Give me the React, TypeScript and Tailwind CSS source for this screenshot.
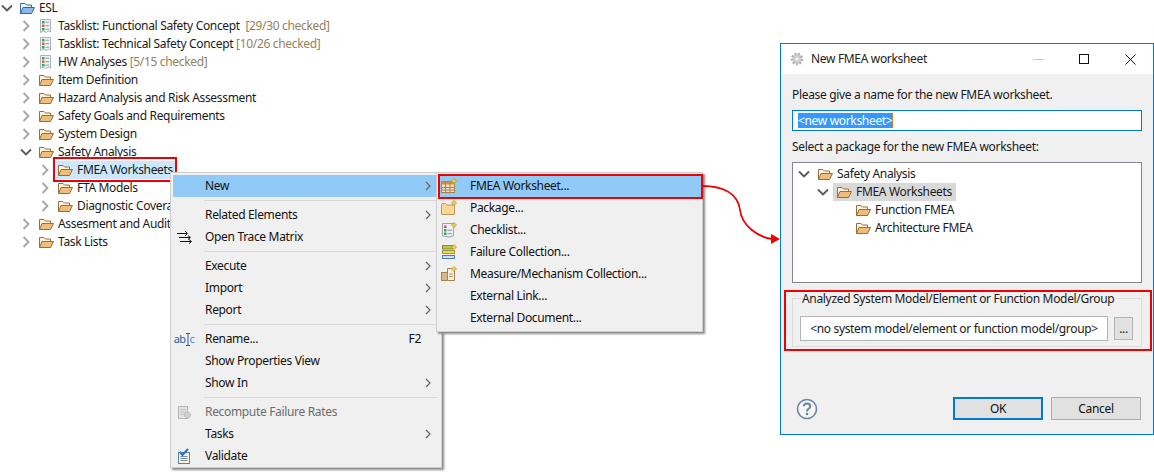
import React from "react";

function Chevron({ open, dark }: { open?: boolean; dark?: boolean }) {
  return (
    <svg width="12" height="12" viewBox="0 0 12 12" fill="none" stroke={dark ? "#595959" : "#a6a6a6"} strokeWidth="1.8" className="shrink-0">
      {open ? <path d="M1 3.5 L6 8.5 L11 3.5" /> : <path d="M3.5 1 L8.5 6 L3.5 11" />}
    </svg>
  );
}

function Folder({ blue }: { blue?: boolean }) {
  return (
    <svg width="16" height="14" viewBox="0 0 16 14" className="shrink-0">
      <path d="M1.5 12.5 V2.5 H6 L7.5 4 H12.5 V6.5" fill={blue ? "#eef5fc" : "#fdf3dc"} stroke={blue ? "#3a6ea8" : "#96703a"} />
      <path d="M1.5 12.5 L4 6.5 H15.5 L12.5 12.5 Z" fill={blue ? "#8db9e8" : "#f0bd7c"} stroke={blue ? "#2f68a8" : "#96703a"} />
    </svg>
  );
}

function ChecklistIcon() {
  return (
    <svg width="16" height="16" viewBox="0 0 16 16" className="shrink-0">
      <path d="M2.5 1.5 H12.5 V14 L10.5 13 L8 14.5 L5.5 13 L2.5 14.5 Z" fill="#f0f3f6" stroke="#a9b4bf" />
      <rect x="4" y="3" width="2.5" height="2.5" fill="#35a35a" />
      <rect x="4" y="6.5" width="2.5" height="2.5" fill="#d2614a" />
      <rect x="4" y="10" width="2.5" height="2.5" fill="#35a35a" />
      <path d="M7.5 4.2 H11 M7.5 7.7 H11 M7.5 11.2 H11" stroke="#8b95a0" />
    </svg>
  );
}

function Plus() {
  return <path d="M13 0.5 L15.5 3 L13 5.5 L10.5 3 Z" fill="#f3d24f" stroke="#a88a2a" strokeWidth="0.7" />;
}

function TableIcon() {
  return (
    <svg width="16" height="16" viewBox="0 0 16 16">
      <rect x="0.5" y="3.5" width="13" height="11" fill="#f6e3c4" stroke="#a8814c" />
      <rect x="0.5" y="3.5" width="13" height="3" fill="#d3913f" />
      <path d="M0.5 9.5 H13.5 M0.5 12 H13.5 M4.5 3.5 V14.5 M9 3.5 V14.5" stroke="#a8814c" />
      <Plus />
    </svg>
  );
}

function PackageIcon() {
  return (
    <svg width="16" height="16" viewBox="0 0 16 16">
      <path d="M0.5 14.5 V4.5 Q0.5 3.5 2 3.5 H4.5 L6 5 H13.5 V14.5 Z" fill="#f8d79b" stroke="#c49a58" />
      <Plus />
    </svg>
  );
}

function NewChecklistIcon() {
  return (
    <svg width="16" height="16" viewBox="0 0 16 16">
      <path d="M1.5 1.5 H12.5 V14 L8 15 L1.5 14 Z" fill="#eef1f4" stroke="#9aa5b1" />
      <rect x="3" y="3.5" width="2.5" height="2.5" fill="#c25a4a" />
      <rect x="3" y="7" width="2.5" height="2.5" fill="#3f9a5a" />
      <rect x="3" y="10.5" width="2.5" height="2.5" fill="#3f9a5a" />
      <path d="M6.5 8.2 H11 M6.5 11.7 H11" stroke="#8b95a0" />
      <Plus />
    </svg>
  );
}

function CollectionIcon() {
  return (
    <svg width="16" height="16" viewBox="0 0 16 16">
      <rect x="1.5" y="1.5" width="10" height="3.5" fill="#b9c94a" stroke="#7f8f3a" />
      <rect x="1.5" y="6.5" width="12" height="3" fill="#ecd95c" stroke="#a8963a" />
      <rect x="1.5" y="11.5" width="12" height="3" fill="#cfe0f2" stroke="#4f7fb5" />
      <Plus />
    </svg>
  );
}

function MeasureIcon() {
  return (
    <svg width="16" height="16" viewBox="0 0 16 16">
      <rect x="0.5" y="6.5" width="6" height="8" fill="#d9b98a" stroke="#a8814c" />
      <path d="M6.5 2.5 H13.5 V14.5 H6.5 Z" fill="#f6efe2" stroke="#a8814c" />
      <path d="M8 8 H12 M8 10.5 H12" stroke="#b59a70" />
      <Plus />
    </svg>
  );
}

function TraceIcon() {
  return (
    <svg width="15" height="14" viewBox="0 0 15 14" fill="none" stroke="#111" strokeWidth="1">
      <path d="M0 3.5 H10 M8 1 L10.5 3.5 L8 6 M2 7.5 H13 M11 5.5 L13.5 7.5 L11 9.5 M3 11.5 H14 M12 9.5 L14.5 11.5 L12 13.5" />
    </svg>
  );
}

function RenameIcon() {
  return (
    <span className="flex items-center text-[11px] tracking-[-0.6px] text-[#2a5f9e]">
      ab
      <svg width="4" height="13" viewBox="0 0 4 13" fill="none" stroke="#2a5f9e" className="shrink-0">
        <path d="M0 0.5 H4 M0 12.5 H4 M2 0.5 V12.5" />
      </svg>
      <span className="text-[#3a8ad8]">c</span>
    </span>
  );
}

function RecomputeIcon() {
  return (
    <svg width="15" height="15" viewBox="0 0 15 15">
      <rect x="1.5" y="1.5" width="9" height="12" fill="#e4e4e4" stroke="#b5b5b5" />
      <path d="M3 4.5 H9 M3 7 H9 M3 9.5 H7" stroke="#c0c0c0" />
      <circle cx="10.5" cy="10" r="3" fill="#d0d0d0" stroke="#b0b0b0" strokeDasharray="1.5 1" />
    </svg>
  );
}

function ValidateIcon() {
  return (
    <svg width="14" height="16" viewBox="0 0 14 16">
      <rect x="1.5" y="4.5" width="11" height="11" fill="#f8f2d8" stroke="#5d7fa8" />
      <path d="M3.5 8.5 H10.5 M3.5 10.5 H10.5 M3.5 12.5 H10.5" stroke="#7b8fa8" />
      <path d="M3 4 L5.5 7 L11 1" fill="none" stroke="#1f6fe0" strokeWidth="2" />
    </svg>
  );
}

function GearIcon() {
  return (
    <svg width="14" height="14" viewBox="0 0 14 14">
      <circle cx="7" cy="7" r="5" fill="#d0d0d0" stroke="#b4b4b4" strokeWidth="2.6" strokeDasharray="2 1.4" />
      <circle cx="7" cy="7" r="3.6" fill="#cdcdcd" />
      <circle cx="7" cy="7" r="1.6" fill="#f2f2f2" />
    </svg>
  );
}

const treeIndent = ["pl-[1px]", "pl-[20px]", "pl-[39px]"];

function TreeRow({
  level,
  label,
  note,
  icon,
  open,
  selected,
}: {
  level: number;
  label: string;
  note?: string;
  icon?: React.ReactNode;
  open?: boolean;
  selected?: boolean;
}) {
  return (
    <div className={`flex h-[18px] items-center ${treeIndent[level]}`}>
      <span className="flex w-[17px] shrink-0 justify-start">
        <Chevron open={open} dark={open} />
      </span>
      <div className={`flex h-[18px] items-center gap-[4px] pl-[1px] pr-[3px] ${selected ? "bg-[#cce8ff]" : ""}`}>
        {icon ?? <Folder />}
        <span className="whitespace-pre">
          {label}
          {note ? <span className="text-[#95815a]">{note}</span> : null}
        </span>
      </div>
    </div>
  );
}

function MenuItem({
  label,
  icon,
  arrow,
  accel,
  active,
  disabled,
}: {
  label: string;
  icon?: React.ReactNode;
  arrow?: boolean;
  accel?: string;
  active?: boolean;
  disabled?: boolean;
}) {
  return (
    <div className={`flex h-[22px] items-center ${active ? "bg-[#91c9f7]" : ""} ${disabled ? "text-[#6d6d6d]" : "text-[#111]"}`}>
      <span className="flex w-[32px] shrink-0 justify-center pr-[10px]">{icon}</span>
      <span className="flex-1 whitespace-nowrap">{label}</span>
      {accel ? <span className="mr-[16px]">{accel}</span> : null}
      {arrow ? (
        <svg width="6" height="10" viewBox="0 0 6 10" fill="none" stroke="#666" strokeWidth="1.2" className="mr-[6px]">
          <path d="M1 1 L5 5 L1 9" />
        </svg>
      ) : null}
    </div>
  );
}

function MenuSep() {
  return <div className="my-[3px] ml-[31px] h-px bg-[#d7d7d7]" />;
}

export default function App() {
  return (
    <div className="relative h-[473px] w-[1154px] overflow-hidden bg-white font-['Noto_Sans',sans-serif] text-[12px] tracking-[-0.33px] text-[#1a1a1a]">
      <div className="-mt-px flex flex-col">
        <TreeRow level={0} label="ESL" open icon={<Folder blue />} />
        <TreeRow level={1} label="Tasklist: Functional Safety Concept " note=" [29/30 checked]" icon={<ChecklistIcon />} />
        <TreeRow level={1} label="Tasklist: Technical Safety Concept " note="[10/26 checked]" icon={<ChecklistIcon />} />
        <TreeRow level={1} label="HW Analyses " note="[5/15 checked]" icon={<ChecklistIcon />} />
        <TreeRow level={1} label="Item Definition" />
        <TreeRow level={1} label="Hazard Analysis and Risk Assessment" />
        <TreeRow level={1} label="Safety Goals and Requirements" />
        <TreeRow level={1} label="System Design" />
        <TreeRow level={1} label="Safety Analysis" open />
        <TreeRow level={2} label="FMEA Worksheets" selected />
        <TreeRow level={2} label="FTA Models" />
        <TreeRow level={2} label="Diagnostic Coverage" />
        <TreeRow level={1} label="Assesment and Audit" />
        <TreeRow level={1} label="Task Lists" />
      </div>

      <div className="absolute left-[53px] top-[157px] h-[25px] w-[124px] border-2 border-[#f00000]" />

      {/* main context menu */}
      <div className="absolute left-[170px] top-[172px] h-[296px] w-[272px] border border-[#cfcfcf] bg-[#f0f0f0] py-[2px] pl-[2px] pr-[4px] shadow-[2px_2px_2px_#8a8a8a]">
        <MenuItem label="New" arrow active />
        <MenuSep />
        <MenuItem label="Related Elements" arrow />
        <MenuItem label="Open Trace Matrix" icon={<TraceIcon />} />
        <MenuSep />
        <MenuItem label="Execute" arrow />
        <MenuItem label="Import" arrow />
        <MenuItem label="Report" arrow />
        <MenuSep />
        <MenuItem label="Rename..." accel="F2" icon={<RenameIcon />} />
        <MenuItem label="Show Properties View" />
        <MenuItem label="Show In" arrow />
        <MenuSep />
        <MenuItem label="Recompute Failure Rates" disabled icon={<RecomputeIcon />} />
        <MenuItem label="Tasks" arrow />
        <MenuItem label="Validate" icon={<ValidateIcon />} />
      </div>

      {/* submenu */}
      <div className="absolute left-[436px] top-[172px] h-[160px] w-[267px] border border-[#cfcfcf] bg-[#f0f0f0] py-[2px] pl-[1px] pr-[1px] shadow-[2px_2px_2px_#8a8a8a]">
        <MenuItem label="FMEA Worksheet..." active icon={<TableIcon />} />
        <MenuItem label="Package..." icon={<PackageIcon />} />
        <MenuItem label="Checklist..." icon={<NewChecklistIcon />} />
        <MenuItem label="Failure Collection..." icon={<CollectionIcon />} />
        <MenuItem label="Measure/Mechanism Collection..." icon={<MeasureIcon />} />
        <MenuItem label="External Link..." />
        <MenuItem label="External Document..." />
      </div>
      <div className="absolute left-[438px] top-[174px] h-[25px] w-[265px] border-2 border-[#f00000]" />

      {/* callout arrow */}
      <svg width="90" height="70" viewBox="0 0 90 70" fill="none" className="absolute left-[700px] top-[180px]">
        <path d="M2 6 C 24 6, 38 14, 40 30 C 42 46, 58 57, 72 59" stroke="#f00000" strokeWidth="1.8" />
        <path d="M71 54 L80 59 L71 64 Z" fill="#f00000" />
      </svg>

      {/* dialog */}
      <div className="absolute left-[780px] top-[43px] flex h-[392px] w-[374px] flex-col border border-[#0078d7] bg-[#f0f0f0]">
        <div className="flex h-[30px] shrink-0 items-center bg-white pl-[9px]">
          <GearIcon />
          <span className="ml-[7px] flex-1 text-[#222]">New FMEA worksheet</span>
          <span className="h-px w-[11px] bg-[#c8c8c8]" />
          <span className="ml-[35px] h-[10px] w-[10px] border border-[#111]" />
          <svg width="11" height="11" viewBox="0 0 11 11" stroke="#111" className="ml-[36px] mr-[17px]">
            <path d="M0.5 0.5 L10.5 10.5 M10.5 0.5 L0.5 10.5" />
          </svg>
        </div>

        <div className="flex flex-1 flex-col px-[11px]">
          <div className="mt-[12px] leading-[18px]">Please give a name for the new FMEA worksheet.</div>
          <div className="mt-[6px] flex h-[21px] items-center border border-[#0078d7] bg-white pl-[5px]">
            <span className="border-r border-r-[#e07a20] bg-[#3399ff] leading-[15px] text-white">&lt;new worksheet&gt;</span>
          </div>
          <div className="mt-[7px] leading-[18px]">Select a package for the new FMEA worksheet:</div>
          <div className="mt-[6px] flex h-[121px] flex-col border border-[#828790] bg-white pl-[5px] pt-[2px]">
            <div className="flex h-[18px] items-center gap-[7px]">
              <Chevron open dark />
              <span className="flex items-center gap-[4px]">
                <Folder />
                <span>Safety Analysis</span>
              </span>
            </div>
            <div className="flex h-[18px] items-center pl-[19px]">
              <Chevron open dark />
              <div className="ml-[4px] flex h-[18px] items-center gap-[4px] bg-[#d9d9d9] pl-[3px] pr-[4px]">
                <Folder />
                <span>FMEA Worksheets</span>
              </div>
            </div>
            <div className="flex h-[18px] items-center gap-[4px] pl-[57px]">
              <Folder />
              <span>Function FMEA</span>
            </div>
            <div className="flex h-[18px] items-center gap-[4px] pl-[57px]">
              <Folder />
              <span>Architecture FMEA</span>
            </div>
          </div>

          <div className="relative mt-[15px] h-[49px] border border-[#dcdcdc]">
            <span className="absolute left-[8px] top-[-9px] bg-[#f0f0f0] px-[1px] leading-[18px]">
              Analyzed System Model/Element or Function Model/Group
            </span>
            <div className="flex items-center pl-[7px] pt-[17px]">
              <div className="flex h-[25px] w-[308px] items-center justify-center border border-[#b4b4b4] bg-white">
                &lt;no system model/element or function model/group&gt;
              </div>
              <div className="ml-[6px] flex h-[23px] w-[19px] items-center justify-center border border-[#b4b4b4] bg-[#e1e1e1]">...</div>
            </div>
          </div>

          <div className="mt-[50px] flex items-center">
            <svg width="22" height="22" viewBox="0 0 22 22" className="ml-[4px]">
              <circle cx="11" cy="11" r="9.5" fill="#f4f6f8" stroke="#6c84a3" strokeWidth="1.6" />
              <path d="M7.8 8.3 Q8 5.6 11 5.6 Q14.2 5.6 14.2 8.2 Q14.2 9.8 12.4 10.8 Q11 11.6 11 13.4" fill="none" stroke="#6c84a3" strokeWidth="2" />
              <circle cx="11" cy="16" r="1.3" fill="#6c84a3" />
            </svg>
            <button className="ml-[135px] h-[23px] w-[90px] border-2 border-[#0078d7] bg-[#e1e1e1] text-[#111]">OK</button>
            <button className="ml-[8px] h-[23px] w-[90px] border border-[#adadad] bg-[#e1e1e1] text-[#111]">Cancel</button>
          </div>
        </div>
      </div>

      <div className="absolute left-[784px] top-[290px] h-[61px] w-[368px] border-2 border-[#f00000]" />
    </div>
  );
}
